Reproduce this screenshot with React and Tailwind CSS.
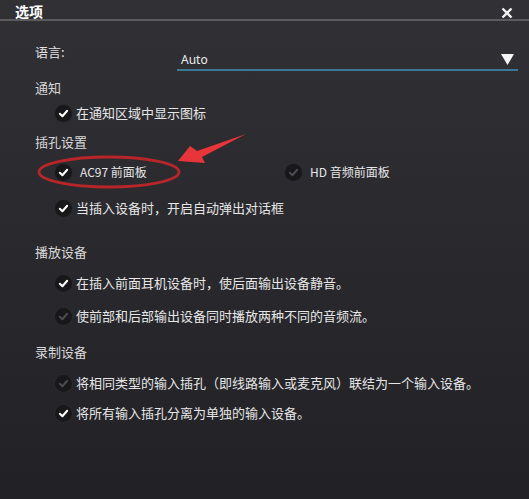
import React from "react";

const font = { fontFamily: '"Noto Sans CJK SC", "Noto Sans", sans-serif' };

function Check({ on }) {
  return (
    <span className="flex h-[17px] w-[17px] shrink-0 items-center justify-center rounded-full bg-[#18181b] shadow-[0_0_0_1px_#2a2a2e]">
      <svg width="11" height="11" viewBox="0 0 12 12">
        <path
          d="M2 6.3 L4.8 9 L10 3"
          fill="none"
          stroke={on ? "#ffffff" : "#4a4a50"}
          strokeWidth="2.2"
          strokeLinecap="round"
          strokeLinejoin="round"
        />
      </svg>
    </span>
  );
}

function Item({ on, children, mt, gap = "gap-[4px]" }) {
  return (
    <div className={`flex h-[24px] items-center pl-[55px] ${gap} ${mt}`}>
      <Check on={on} />
      <span className="text-[13px] text-[#e6e6e6]">{children}</span>
    </div>
  );
}

function Head({ children, mt }) {
  return (
    <div className={`flex h-[24px] items-center pl-[35px] text-[13px] text-[#d9d9d9] ${mt}`}>
      {children}
    </div>
  );
}

export default function App() {
  return (
    <div
      className="relative h-[499px] w-[529px] overflow-hidden bg-gradient-to-b from-[#303035] to-[#222226]"
      style={font}
    >
      <div className="flex h-[21px] items-center justify-between border-b-2 border-[#5c5c60] pl-[15px] pr-[16px]">
        <span className="mt-[3px] text-[14px] font-bold leading-none text-white">选项</span>
        <svg width="12" height="12" viewBox="0 0 12 12" className="mt-[7px]">
          <path d="M1.5 1.5 L10.5 10.5 M10.5 1.5 L1.5 10.5" stroke="#f2f2f2" strokeWidth="2.4" />
        </svg>
      </div>

      <div className="flex items-start">
        <div className="ml-[35px] mt-[22px] h-[18px] w-[142px] text-[13px] leading-[18px] text-[#e0e0e0]">
          语言:
        </div>
        <div className="mt-[29px] flex h-[21px] w-[341px] items-center justify-between border-b-2 border-[#3a7897] pl-[4px] pr-[4px]">
          <span className="text-[12px] text-[#ececec]" style={{ fontFamily: '"Noto Sans", sans-serif' }}>Auto</span>
          <svg width="13" height="11" viewBox="0 0 13 11">
            <path d="M0 0 H13 L6.5 11 Z" fill="#f4f4f4" />
          </svg>
        </div>
      </div>

      <Head mt="mt-[5px]">通知</Head>
      <Item on mt="mt-[1px]">在通知区域中显示图标</Item>
      <Head mt="mt-[5px]">插孔设置</Head>
      <div className="mt-[6px] flex h-[24px] items-center">
        <div className="flex items-center gap-[8px] pl-[55px] w-[285px]">
          <Check on />
          <span className="text-[12px] text-[#e6e6e6]">AC97 前面板</span>
        </div>
        <div className="flex items-center gap-[8px]">
          <Check on={false} />
          <span className="text-[12px] text-[#e6e6e6]">HD 音频前面板</span>
        </div>
      </div>
      <Item on mt="mt-[12px]">当插入设备时，开启自动弹出对话框</Item>
      <Head mt="mt-[20px]">播放设备</Head>
      <Item on mt="mt-[7px]">在插入前面耳机设备时，使后面输出设备静音。</Item>
      <Item on={false} mt="mt-[9px]">使前部和后部输出设备同时播放两种不同的音频流。</Item>
      <Head mt="mt-[12px]">录制设备</Head>
      <Item on={false} mt="mt-[7px]">将相同类型的输入插孔（即线路输入或麦克风）联结为一个输入设备。</Item>
      <Item on mt="mt-[6px]">将所有输入插孔分离为单独的输入设备。</Item>

      <svg className="pointer-events-none absolute left-0 top-0" width="529" height="499">
        <ellipse cx="109" cy="172" rx="70" ry="15" fill="none" stroke="#b8262a" strokeWidth="2.8" />
        <polygon points="178,161 190,146 197,151 246,134 202,157 205,163" fill="#e8353a" />
      </svg>
    </div>
  );
}
